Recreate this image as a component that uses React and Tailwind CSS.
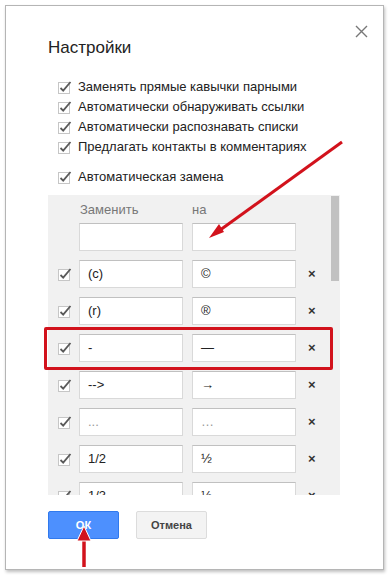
import React from "react";

const font = { fontFamily: '"Liberation Sans", Arial, sans-serif' };

// маленький чекбокс в стиле Google Docs
const Check = () => (
  <svg width="15" height="15" viewBox="0 0 15 15" className="shrink-0">
    <rect x="1.5" y="2.5" width="11" height="11" fill="#fff" stroke="#c6c6c6" />
    <path d="M3.5 8 L6.2 10.6 L13.5 2" fill="none" stroke="#5a5a5a" strokeWidth="1.8" />
  </svg>
);

const options = [
  "Заменять прямые кавычки парными",
  "Автоматически обнаруживать ссылки",
  "Автоматически распознавать списки",
  "Предлагать контакты в комментариях",
];

const rows = [
  ["(c)", "©"],
  ["(r)", "®"],
  ["-", "—"],
  ["-->", "→"],
  ["...", "…"],
  ["1/2", "½"],
  ["1/3", "⅓"],
];

const Field = ({ value, muted }) => (
  <div
    className={`w-[104px] h-[28px] bg-white border border-[#d9d9d9] border-t-[#c0c0c0] flex items-center pl-[8px] text-[13px] ${
      muted ? "text-[#999]" : "text-[#222]"
    }`}
  >
    {value}
  </div>
);

export default function App() {
  return (
    <div className="relative w-[389px] h-[575px] bg-white overflow-hidden" style={font}>
      {/* диалог */}
      <div className="absolute left-[5px] top-[5px] w-[379px] h-[565px] bg-white border border-[#b5b5b5] shadow-[1px_2px_3px_rgba(0,0,0,0.25)]">
        {/* закрыть */}
        <svg className="absolute left-[349px] top-[19px]" width="13" height="13" viewBox="0 0 13 13">
          <path d="M1 1 L12 12 M12 1 L1 12" stroke="#777" strokeWidth="1.4" />
        </svg>

        <div className="pl-[42px] pt-[32px]">
          <div className="h-[20px] leading-[20px] text-[17px] text-[#222]">Настройки</div>

          <div className="mt-[19px] flex flex-col">
            {options.map((o) => (
              <div key={o} className="h-[20px] flex items-center gap-[6px] pl-[9px] text-[13px] text-[#222]">
                <Check />
                <span>{o}</span>
              </div>
            ))}
            <div className="mt-[10px] h-[20px] flex items-center gap-[6px] pl-[9px] text-[13px] text-[#222]">
              <Check />
              <span>Автоматическая замена</span>
            </div>
          </div>

          {/* таблица замен */}
          <div className="relative mt-[8px] w-[292px] h-[300px] bg-[#f1f1f1] overflow-hidden pt-[5px]">
            <div className="absolute right-[1px] top-[1px] w-[8px] h-[85px] bg-[#c1c1c1]" />
            <div className="h-[20px] flex items-center text-[13px] text-[#777]">
              <span className="ml-[31px] w-[113px] pl-[1px]">Заменить</span>
              <span>на</span>
            </div>
            <div className="mt-[3px] flex flex-col gap-[9px]">
              <div className="flex items-center gap-[9px] pl-[31px]">
                <Field value="" />
                <Field value="" />
              </div>
              {rows.map(([a, b]) => (
                <div key={a} className="flex items-center">
                  <div className="w-[31px] flex justify-center pl-[2px]">
                    <Check />
                  </div>
                  <div className="flex gap-[9px]">
                    <Field value={a} muted={a === "..."} />
                    <Field value={b} muted={a === "..."} />
                  </div>
                  <span className="ml-[12px] text-[13px] font-bold text-[#333]">×</span>
                </div>
              ))}
            </div>
          </div>

          {/* кнопки */}
          <div className="mt-[16px] flex gap-[17px]">
            <button className="w-[71px] h-[28px] rounded-[2px] bg-[#4d90fe] border border-[#3079ed] text-white text-[11px] font-bold">
              ОК
            </button>
            <button className="w-[71px] h-[28px] rounded-[2px] bg-[#f3f3f3] border border-[#dcdcdc] text-[#444] text-[11px] font-bold">
              Отмена
            </button>
          </div>
        </div>
      </div>

      {/* красная рамка-выделение */}
      <div className="absolute left-[44px] top-[327px] w-[289px] h-[43px] border-[3px] border-[#d2121c] rounded-[2px]" />

      {/* стрелки */}
      <svg className="absolute left-0 top-0 pointer-events-none" width="389" height="575" viewBox="0 0 389 575">
        <path d="M342 142 L216 233" stroke="#d2121c" strokeWidth="3" fill="none" />
        <path d="M209 238 L219 224 L224 232 Z" fill="#d2121c" />
        <path d="M84 567 L84 538" stroke="#d2121c" strokeWidth="3.5" fill="none" />
        <path d="M84 526 L77 541 L91 541 Z" fill="#d2121c" stroke="#fff" strokeWidth="1" />
      </svg>
    </div>
  );
}
